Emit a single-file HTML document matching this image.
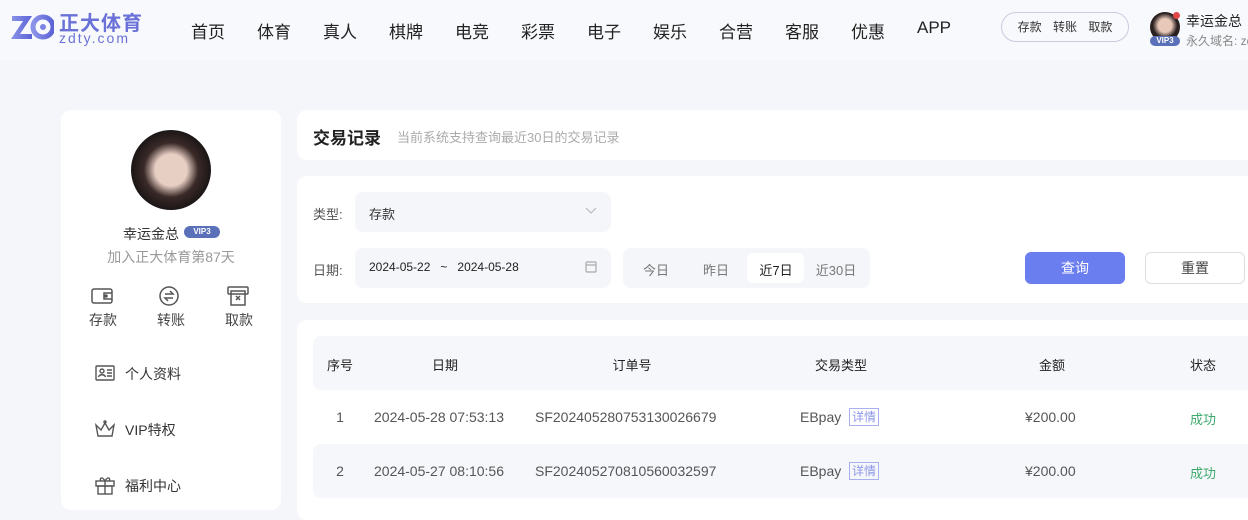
<!DOCTYPE html>
<html><head><meta charset="utf-8"><style>
*{margin:0;padding:0;box-sizing:border-box}
body{width:1248px;height:505px;overflow:hidden;background:#f5f6fa;font-family:"Liberation Sans","Noto Sans CJK SC",sans-serif;color:#333;position:relative}
.a{position:absolute}
.hdr{left:0;top:0;width:1248px;height:60px;background:#f8f9fc}
.nav{top:18px;font-size:17px;color:#222;width:60px;text-align:center;margin-left:-30px}
.panel{background:#fff;border-radius:10px}
.c{text-align:center}
</style></head><body>
<div class="a hdr"></div>
<svg class="a" style="left:10px;top:12px" width="44" height="30" viewBox="0 0 44 30"><defs><linearGradient id="g" x1="0" x2="1"><stop offset="0" stop-color="#8b93e8"/><stop offset="1" stop-color="#5b63d6"/></linearGradient></defs><path d="M2 4h20l-12 18h12v5H1l12-18H2z" fill="url(#g)"/><circle cx="33" cy="15" r="10" fill="none" stroke="url(#g)" stroke-width="5"/><circle cx="33" cy="15" r="3" fill="#7b83e0"/></svg>
<div class="a" style="left:59px;top:7px;font-size:20px;font-weight:bold;color:#6a72d8;letter-spacing:1px">正大体育</div>
<div class="a" style="left:59px;top:30px;font-size:14px;color:#6a72d8;letter-spacing:2px">zdty.com</div>
<div class="a nav" style="left:208px">首页</div><div class="a nav" style="left:274px">体育</div><div class="a nav" style="left:340px">真人</div><div class="a nav" style="left:406px">棋牌</div><div class="a nav" style="left:472px">电竞</div><div class="a nav" style="left:538px">彩票</div><div class="a nav" style="left:604px">电子</div><div class="a nav" style="left:670px">娱乐</div><div class="a nav" style="left:736px">合营</div><div class="a nav" style="left:802px">客服</div><div class="a nav" style="left:868px">优惠</div><div class="a nav" style="left:934px">APP</div>
<div class="a" style="left:1001px;top:12px;width:128px;height:30px;border:1px solid #c9cce0;border-radius:15px;font-size:12px;color:#333;line-height:28px;text-align:center;word-spacing:8px">存款 转账 取款</div>
<div class="a" style="left:1150px;top:12px;width:30px;height:30px;border-radius:50%;background:radial-gradient(circle at 50% 45%,#e8c8b8 0 30%,#2a2020 55%)"></div>
<div class="a" style="left:1173px;top:12px;width:7px;height:7px;border-radius:50%;background:#e04848"></div>
<div class="a" style="left:1150px;top:36px;width:30px;height:10px;border-radius:5px;background:#5a70b8;color:#fff;font-size:8px;line-height:10px;text-align:center;font-weight:bold">VIP3</div>
<div class="a" style="left:1186px;top:11px;font-size:14px;color:#222">幸运金总</div>
<div class="a" style="left:1186px;top:32px;font-size:12px;color:#888;white-space:nowrap">永久域名: zd</div>

<div class="a panel" style="left:61px;top:110px;width:220px;height:400px"></div>
<div class="a" style="left:131px;top:130px;width:80px;height:80px;border-radius:50%;background:radial-gradient(ellipse at 50% 50%,#e8cfc4 0 28%,#3a2a28 48%,#1c1616 70%)"></div>
<div class="a" style="left:123px;top:224px;font-size:14px;color:#333">幸运金总</div>
<div class="a" style="left:184px;top:226px;width:36px;height:12px;border-radius:6px;background:#5a70b8;color:#fff;font-size:8px;line-height:12px;text-align:center;font-weight:bold">VIP3</div>
<div class="a c" style="left:61px;top:247px;width:220px;font-size:14px;color:#999">加入正大体育第87天</div>
<svg class="a" style="left:91px;top:287px" width="22" height="18" viewBox="0 0 22 18" fill="none" stroke="#555" stroke-width="1.5"><rect x="1" y="2" width="20" height="14" rx="2"/><path d="M21 6h-8v6h8"/><circle cx="15" cy="9" r="1" fill="#555"/></svg>
<svg class="a" style="left:158px;top:286px" width="22" height="20" viewBox="0 0 22 20" fill="none" stroke="#555" stroke-width="1.5"><circle cx="11" cy="10" r="9"/><path d="M7 8h8l-3-3M15 12H7l3 3"/></svg>
<svg class="a" style="left:227px;top:286px" width="22" height="20" viewBox="0 0 22 20" fill="none" stroke="#555" stroke-width="1.5"><rect x="1" y="1" width="20" height="7" rx="1"/><rect x="4" y="5" width="14" height="14"/><path d="M9 10l4 4M13 10l-4 4"/></svg>
<div class="a" style="left:89px;top:310px;font-size:14px;color:#444">存款</div>
<div class="a" style="left:157px;top:310px;font-size:14px;color:#444">转账</div>
<div class="a" style="left:225px;top:310px;font-size:14px;color:#444">取款</div>
<svg class="a" style="left:95px;top:365px" width="20" height="16" viewBox="0 0 20 16" fill="none" stroke="#555" stroke-width="1.4"><rect x="1" y="1" width="18" height="14" rx="1"/><circle cx="7" cy="6" r="2"/><path d="M3.5 12c1-3 6-3 7 0M12 5h5M12 8h5M12 11h5"/></svg>
<div class="a" style="left:125px;top:364px;font-size:14px;color:#333">个人资料</div>
<svg class="a" style="left:94px;top:420px" width="22" height="18" viewBox="0 0 22 18" fill="none" stroke="#555" stroke-width="1.4"><path d="M2 5l5 5 4-7 4 7 5-5-2 11H4z"/><circle cx="11" cy="2" r="1"/></svg>
<div class="a" style="left:125px;top:420px;font-size:14px;color:#333">VIP特权</div>
<svg class="a" style="left:95px;top:475px" width="20" height="20" viewBox="0 0 20 20" fill="none" stroke="#555" stroke-width="1.4"><rect x="1" y="6" width="18" height="5"/><rect x="3" y="11" width="14" height="8"/><path d="M10 6v13M10 6C7 1 4 3 6 6M10 6c3-5 6-3 4 0"/></svg>
<div class="a" style="left:125px;top:476px;font-size:14px;color:#333">福利中心</div>

<div class="a panel" style="left:297px;top:110px;width:970px;height:50px"></div>
<div class="a" style="left:313px;top:124px;font-size:17px;font-weight:bold;color:#222">交易记录</div>
<div class="a" style="left:397px;top:127px;font-size:13px;color:#aaa">当前系统支持查询最近30日的交易记录</div>

<div class="a panel" style="left:297px;top:176px;width:970px;height:127px"></div>
<div class="a" style="left:313px;top:204px;font-size:13px;color:#555">类型:</div>
<div class="a" style="left:355px;top:192px;width:256px;height:40px;background:#f5f6fa;border-radius:8px"></div>
<div class="a" style="left:369px;top:204px;font-size:13px;color:#333">存款</div>
<svg class="a" style="left:585px;top:207px" width="12" height="8" viewBox="0 0 12 8" fill="none" stroke="#bbb" stroke-width="1.2"><path d="M1 1l5 5 5-5"/></svg>
<div class="a" style="left:313px;top:260px;font-size:13px;color:#555">日期:</div>
<div class="a" style="left:355px;top:248px;width:256px;height:40px;background:#f5f6fa;border-radius:8px"></div>
<div class="a" style="left:369px;top:260px;font-size:12px;color:#222;white-space:pre">2024-05-22   ~   2024-05-28</div>
<svg class="a" style="left:585px;top:261px" width="12" height="12" viewBox="0 0 12 12" fill="none" stroke="#aaa" stroke-width="1.2"><rect x="1" y="1" width="10" height="10" rx="1"/><path d="M1 4h10"/></svg>
<div class="a" style="left:623px;top:248px;width:247px;height:40px;background:#f5f6fa;border-radius:8px"></div>
<div class="a" style="left:747px;top:253px;width:57px;height:30px;background:#fff;border-radius:6px"></div>
<div class="a c" style="left:626px;top:260px;width:60px;font-size:13px;color:#777">今日</div>
<div class="a c" style="left:686px;top:260px;width:60px;font-size:13px;color:#777">昨日</div>
<div class="a c" style="left:746px;top:260px;width:60px;font-size:13px;color:#222">近7日</div>
<div class="a c" style="left:806px;top:260px;width:60px;font-size:13px;color:#777">近30日</div>
<div class="a c" style="left:1025px;top:252px;width:100px;height:32px;background:#6b7ef0;border-radius:6px;color:#fff;font-size:14px;line-height:32px">查询</div>
<div class="a c" style="left:1145px;top:252px;width:100px;height:32px;border:1px solid #ddd;border-radius:6px;color:#444;font-size:14px;line-height:30px">重置</div>

<div class="a panel" style="left:297px;top:320px;width:970px;height:200px"></div>
<div class="a" style="left:313px;top:336px;width:950px;height:54px;background:#f6f7fb;border-radius:8px"></div>
<div class="a" style="left:313px;top:444px;width:950px;height:54px;background:#f6f7fb;border-radius:8px"></div>
<div class="a c" style="left:310px;top:355px;width:60px;font-size:13px;color:#222">序号</div>
<div class="a c" style="left:395px;top:355px;width:100px;font-size:13px;color:#222">日期</div>
<div class="a c" style="left:582px;top:355px;width:100px;font-size:13px;color:#222">订单号</div>
<div class="a c" style="left:791px;top:355px;width:100px;font-size:13px;color:#222">交易类型</div>
<div class="a c" style="left:1002px;top:355px;width:100px;font-size:13px;color:#222">金额</div>
<div class="a c" style="left:1173px;top:355px;width:60px;font-size:13px;color:#222">状态</div>

<div class="a c" style="left:310px;top:409px;width:60px;font-size:14px;color:#555">1</div>
<div class="a" style="left:374px;top:409px;font-size:14px;color:#555">2024-05-28 07:53:13</div>
<div class="a" style="left:535px;top:409px;font-size:14px;color:#555">SF20240528075313002667​9</div>
<div class="a" style="left:800px;top:409px;font-size:14px;color:#555">EBpay</div>
<div class="a" style="left:849px;top:408px;border:1px solid #a8b0ee;color:#8d96e8;font-size:12px;padding:0 2px;line-height:16px">详情</div>
<div class="a" style="left:1025px;top:409px;font-size:14px;color:#555">¥200.00</div>
<div class="a c" style="left:1173px;top:409px;width:60px;font-size:13px;color:#3da96b">成功</div>

<div class="a c" style="left:310px;top:463px;width:60px;font-size:14px;color:#555">2</div>
<div class="a" style="left:374px;top:463px;font-size:14px;color:#555">2024-05-27 08:10:56</div>
<div class="a" style="left:535px;top:463px;font-size:14px;color:#555">SF202405270810560032597</div>
<div class="a" style="left:800px;top:463px;font-size:14px;color:#555">EBpay</div>
<div class="a" style="left:849px;top:462px;border:1px solid #a8b0ee;color:#8d96e8;font-size:12px;padding:0 2px;line-height:16px">详情</div>
<div class="a" style="left:1025px;top:463px;font-size:14px;color:#555">¥200.00</div>
<div class="a c" style="left:1173px;top:463px;width:60px;font-size:13px;color:#3da96b">成功</div>
</body></html>
